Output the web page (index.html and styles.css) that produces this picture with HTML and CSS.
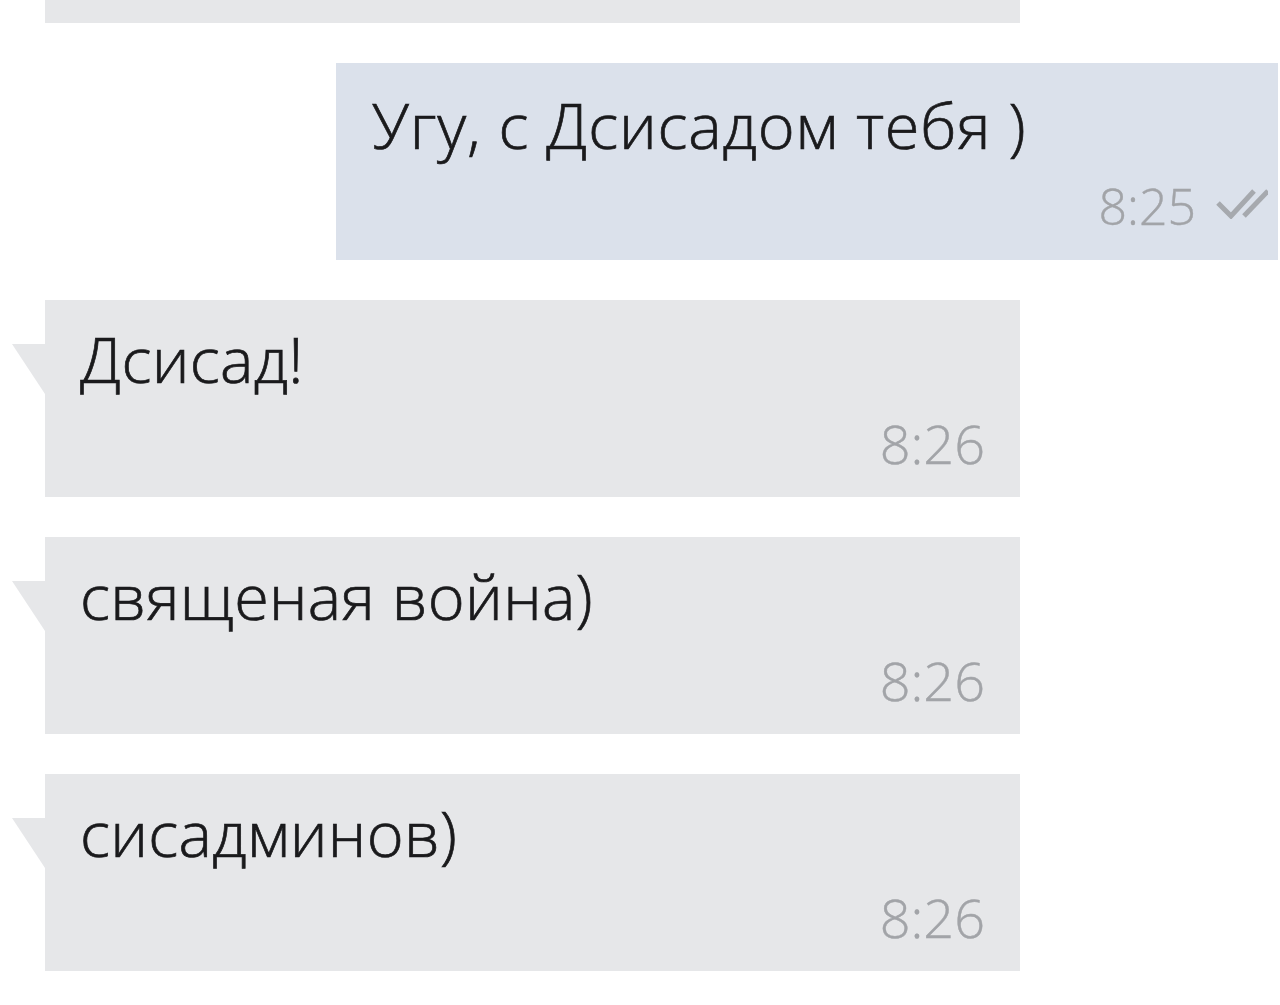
FILE: index.html
```html
<!DOCTYPE html>
<html lang="ru">
<head>
    <meta charset="UTF-8">
    <meta name="viewport" content="width=device-width, initial-scale=1.0">
    <title>Чат</title>
    <link rel="stylesheet" href="styles.css">
</head>
<body>
    <main class="chat">
        <div class="msg in cut"></div>

        <div class="msg out">
            <p class="text">Угу, с Дсисадом тебя )</p>
            <div class="meta">
                <span class="time">8:25</span>
                <svg class="ticks" viewBox="0 0 52 30" width="52" height="30">
                    <path d="M2 14 L15 27 L38 2" fill="none" stroke="#a6a9ae" stroke-width="5"/>
                    <path d="M28 27 L52 2" fill="none" stroke="#a6a9ae" stroke-width="5"/>
                </svg>
            </div>
        </div>

        <div class="msg in">
            <p class="text">Дсисад!</p>
            <div class="meta"><span class="time">8:26</span></div>
        </div>

        <div class="msg in">
            <p class="text">священая война)</p>
            <div class="meta"><span class="time">8:26</span></div>
        </div>

        <div class="msg in">
            <p class="text">сисадминов)</p>
            <div class="meta"><span class="time">8:26</span></div>
        </div>
    </main>
</body>
</html>
```

FILE: styles.css
```css
*, *::before, *::after{
    box-sizing: border-box;
    margin: 0;
    padding: 0;
}

body{
    background: #fff;
    font-family: "Open Sans", "Noto Sans", sans-serif;
    font-weight: 300;
    color: #1a1a1c;
}

.chat{
    display: flex;
    flex-direction: column;
    gap: 40px;
    padding-left: 45px;
}

.msg{
    position: relative;
    height: 197px;
    display: flex;
    flex-direction: column;
    justify-content: space-between;
}

.msg.in{
    width: 975px;
    background: #e6e7e9;
    padding: 24px 35px 24px 35px;
}

.msg.in::before{
    content: "";
    position: absolute;
    left: -33px;
    top: 44px;
    width: 33px;
    height: 50px;
    background: #e6e7e9;
    clip-path: polygon(0 0, 100% 0, 100% 100%);
}

.msg.cut{
    height: 23px;
    padding: 0;
}

.msg.cut::before{
    display: none;
}

.msg.out{
    align-self: flex-end;
    width: 942px;
    margin-right: 2px;
    background: #dbe1eb;
    padding: 27px 10px 24px 36px;
}

.text{
    font-size: 63px;
    line-height: 70px;
    letter-spacing: 0.3px;
    -webkit-text-stroke: 0.7px #1a1a1c;
    white-space: nowrap;
}

.out .text{
    letter-spacing: 0.8px;
}

.meta{
    display: flex;
    justify-content: flex-end;
    align-items: center;
    gap: 20px;
}

.time{
    font-size: 54px;
    line-height: 60px;
    color: #a2a4a8;
    -webkit-text-stroke: 0.4px #a2a4a8;
}

.out .time{
    font-size: 50px;
}

.ticks{
    display: block;
    margin-bottom: 4px;
}
```
